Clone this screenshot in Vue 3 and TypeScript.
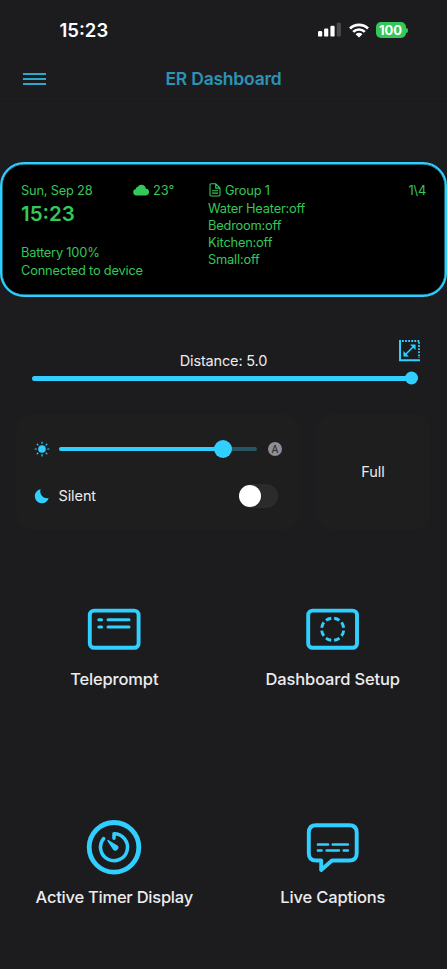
<script setup lang="ts">
import { ref } from 'vue'

interface Device {
  name: string
  state: string
}

const time = '15:23'
const devices: Device[] = [
  { name: 'Water Heater', state: 'off' },
  { name: 'Bedroom', state: 'off' },
  { name: 'Kitchen', state: 'off' },
  { name: 'Small', state: 'off' },
]
const distance = ref<number>(5)
const brightness = ref<number>(83)
const silent = ref<boolean>(false)
const rays: number[] = [0, 45, 90, 135, 180, 225, 270, 315]
</script>

<template>
  <div class="screen">
    <header class="status">
      <span class="clock">{{ time }}</span>
      <div class="indicators">
        <svg class="signal" width="24" height="16" viewBox="0 0 24 16">
          <rect x="0" y="9" width="4.2" height="5.6" rx="1.2" fill="#fff" />
          <rect x="6.1" y="6.6" width="4.2" height="8" rx="1.2" fill="#fff" />
          <rect x="12.4" y="3.8" width="4.2" height="10.8" rx="1.2" fill="#fff" />
          <rect x="18.7" y="0.8" width="4.2" height="13.8" rx="1.2" fill="#4b4b4d" />
        </svg>
        <svg class="wifi" width="20" height="15" viewBox="0 0 20 15">
          <g fill="none" stroke="#fff" stroke-width="2.7">
            <path d="M1 5.5 A12.8 12.8 0 0 1 19 5.5" />
            <path d="M4.2 8.9 A8.2 8.2 0 0 1 15.8 8.9" />
          </g>
          <path d="M6.6 11.2 A4.8 4.8 0 0 1 13.4 11.2 L10 14.6 Z" fill="#fff" />
        </svg>
        <div class="battery"><span class="level">100</span><i class="nub"></i></div>
      </div>
    </header>

    <nav class="nav">
      <button class="menu" aria-label="Menu"><i></i><i></i><i></i></button>
      <h1 class="title">ER Dashboard</h1>
    </nav>

    <section class="preview">
      <div class="left">
        <div class="row">
          <span class="date">Sun, Sep 28</span>
          <span class="weather">
            <svg width="16" height="12" viewBox="0 0 16 12">
              <path d="M3.6 11.4 A3.3 3.3 0 0 1 2.7 4.9 A2.5 2.5 0 0 1 4.6 3.1 A4.4 4.4 0 0 1 12.8 4.4 A3.5 3.5 0 0 1 12.3 11.4 Z" fill="#34c759" />
            </svg>
            <span>23°</span>
          </span>
        </div>
        <strong class="big">{{ time }}</strong>
        <span class="line bat">Battery 100%</span>
        <span class="line conn">Connected to device</span>
      </div>
      <div class="right">
        <div class="row head">
          <svg width="12" height="14" viewBox="0 0 12 14" fill="none" stroke="#34c759" stroke-width="1.1" stroke-linejoin="round">
            <path d="M2.2 .8 H6.8 L11 5 V11.8 Q11 13 9.8 13 H2.2 Q1 13 1 11.8 V2 Q1 .8 2.2 .8 Z M6.7 1 V5.1 H10.8 M3 7.7 H9 M3 10.1 H9" />
          </svg>
          <span class="group">Group 1</span>
          <span class="page">1\4</span>
        </div>
        <ul class="devices">
          <li v-for="d in devices" :key="d.name">{{ d.name }}:{{ d.state }}</li>
        </ul>
      </div>
    </section>

    <section class="distance">
      <span class="distance-label">Distance: {{ distance.toFixed(1) }}</span>
      <svg class="resize" width="22" height="22" viewBox="0 0 22 22" fill="none" stroke="#30cfff">
        <path d="M1 0 V20.2 H21" stroke-width="2" />
        <path d="M3 1 H21" stroke-width="1.8" stroke-dasharray="1.8 1.3" />
        <path d="M20 2 V18" stroke-width="1.8" stroke-dasharray="1.8 1.3" />
        <path d="M6.5 14.5 L14.5 6.5" stroke-width="1.6" />
        <path d="M11.6 4.8 H16.3 V9.5 Z M4.7 11.6 V16.3 H9.4 Z" fill="#30cfff" stroke-width=".5" stroke-linejoin="round" />
      </svg>
      <div class="track full"><i class="knob small"></i></div>
    </section>

    <section class="cards">
      <div class="card controls">
        <div class="control">
          <svg class="sun" width="16" height="16" viewBox="-8 -8 16 16">
            <circle r="3.8" fill="#30cfff" />
            <path v-for="r in rays" :key="r" d="M0 -6.9 V-5.7" :transform="`rotate(${r})`" stroke="#30cfff" stroke-width="1.2" stroke-linecap="round" />
          </svg>
          <div class="track dim">
            <div class="fill" :style="{ width: brightness + '%' }"><i class="knob"></i></div>
          </div>
          <span class="auto">A</span>
        </div>
        <div class="control silent">
          <svg class="moon" width="16" height="16" viewBox="0 0 16 16">
            <path d="M6.6 1.2 C5.1 5.9 8.8 11.2 14.7 10.2 A7.1 7.1 0 1 1 6.6 1.2 Z" fill="#30cfff" />
          </svg>
          <span class="silent-label">Silent</span>
          <button class="switch" role="switch" :aria-checked="silent" @click="silent = !silent"><i></i></button>
        </div>
      </div>
      <div class="card mode">Full</div>
    </section>

    <main class="tiles">
      <div class="tile">
        <svg width="56" height="56" viewBox="0 0 56 56" fill="none" stroke="#30cfff" stroke-linecap="round">
          <rect x="3.8" y="9.6" width="48.8" height="37.2" rx="4.4" stroke-width="3.9" />
          <path d="M12.8 18.7 H15.6 M22 18.7 H43 M12.8 26 H15.6 M22 26 H43" stroke-width="3" />
        </svg>
        <span class="caption teleprompt">Teleprompt</span>
      </div>
      <div class="tile">
        <svg width="56" height="56" viewBox="0 0 56 56" fill="none" stroke="#30cfff">
          <rect x="3.2" y="9.6" width="48.8" height="37.2" rx="4.4" stroke-width="3.9" />
          <circle cx="27.7" cy="28.2" r="11.1" stroke-width="2.9" pathLength="80" stroke-dasharray="6.6 3.4" stroke-dashoffset="-1.7" />
        </svg>
        <span class="caption">Dashboard Setup</span>
      </div>
      <div class="tile">
        <svg width="56" height="56" viewBox="0 0 56 56" fill="none" stroke="#30cfff">
          <circle cx="28" cy="28.3" r="24.8" stroke-width="4.8" />
          <path d="M28 19.3 V14.7 A13.5 13.5 0 1 1 17.7 19.5" stroke-width="3.5" stroke-linecap="round" stroke-linejoin="round" />
          <path d="M22 21.5 L31 27 A2.2 2.2 0 0 1 27.6 30.2 Z" fill="#30cfff" stroke-width="1.4" stroke-linejoin="round" />
        </svg>
        <span class="caption timer">Active Timer Display</span>
      </div>
      <div class="tile">
        <svg width="56" height="56" viewBox="0 0 56 56" fill="none" stroke="#30cfff" stroke-linejoin="round" stroke-linecap="round">
          <path d="M11.2 6.3 H44.2 Q51.7 6.3 51.7 13.8 V34.2 Q51.7 41.5 44.2 41.5 H27 L16.2 51 V41.5 H11.2 Q3.8 41.5 3.8 34.2 V13.8 Q3.8 6.3 11.2 6.3 Z" stroke-width="3.9" />
          <path d="M13 25.5 H23 M27.8 25.5 H42.8 M13 31.5 H16.5 M21.7 31.5 H33.9 M38.8 31.5 H42.8" stroke-width="2.7" />
        </svg>
        <span class="caption">Live Captions</span>
      </div>
    </main>
  </div>
</template>

<style>
body {
  background: #1c1c1e;
}
</style>

<style scoped>
* {
  box-sizing: border-box;
}
.screen {
  width: 100%;
  height: 969px;
  display: flex;
  flex-direction: column;
  background: #1c1c1e;
  color: #ececee;
  font-family: Inter, "Liberation Sans", sans-serif;
  overflow: hidden;
  white-space: nowrap;
}
button {
  border: 0;
  padding: 0;
  background: none;
}
svg {
  display: block;
  flex: none;
}
.status {
  height: 58px;
  padding: 2px 39px 0 59.5px;
  display: flex;
  align-items: center;
  justify-content: space-between;
}
.clock {
  color: #fff;
  font-size: 18.5px;
  font-weight: 600;
}
.indicators {
  display: flex;
  align-items: center;
}
.wifi {
  margin: 0 7px 0 6.5px;
}
.battery {
  display: flex;
  align-items: center;
  gap: 0.5px;
}
.level {
  width: 30px;
  height: 16px;
  border-radius: 5px;
  background: #34c759;
  color: #fff;
  font-size: 13px;
  font-weight: 700;
  line-height: 16px;
  text-align: center;
}
.nub {
  width: 2px;
  height: 5px;
  border-radius: 0 2px 2px 0;
  background: #34c759;
}
.nav {
  height: 44px;
  display: grid;
  grid-template-columns: 60px 1fr 60px;
  align-items: center;
  padding-bottom: 2px;
  border-bottom: 1px solid #19191b;
}
.menu {
  width: 23px;
  margin-left: 23px;
  display: grid;
  gap: 3px;
}
.menu i {
  height: 2px;
  background: #2ca8cd;
}
.title {
  margin: 0;
  text-align: center;
  color: #2b93b8;
  font-size: 17.5px;
  font-weight: 600;
  letter-spacing: -0.22px;
}
.preview {
  height: 135px;
  margin-top: 60px;
  padding: 18px 19px 0 19px;
  display: grid;
  grid-template-columns: 187px 1fr;
  border: 2px solid #30cfff;
  border-radius: 24px;
  box-shadow: inset 0 0 0 0.5px #30cfff;
  background: #000;
  color: #34c759;
  font-size: 12.8px;
  letter-spacing: -0.18px;
}
.left,
.right {
  display: flex;
  flex-direction: column;
}
.row {
  display: flex;
  align-items: center;
  height: 16px;
}
.date {
  width: 112px;
}
.weather {
  display: flex;
  align-items: center;
  gap: 4px;
  letter-spacing: 0;
}
.big {
  font-size: 20.5px;
  font-weight: 600;
  line-height: 32px;
  letter-spacing: 0;
}
.line {
  line-height: 18px;
}
.bat {
  margin-top: 14px;
}
.group {
  margin-left: 4px;
}
.head {
  padding-left: 1px;
}
.page {
  margin-left: auto;
}
.devices {
  margin: 2px 0 0;
  padding: 0;
  list-style: none;
  line-height: 17px;
}
.distance {
  position: relative;
  height: 117px;
  padding: 54px 32px 0;
  display: flex;
  flex-direction: column;
}
.distance-label {
  height: 20px;
  line-height: 20px;
  text-align: center;
  font-size: 14.5px;
  letter-spacing: -0.15px;
}
.resize {
  position: absolute;
  top: 43px;
  right: 26px;
}
.track {
  position: relative;
  height: 4.6px;
  border-radius: 3px;
}
.track.full {
  margin-top: 5px;
  background: #30cfff;
}
.track.dim {
  flex: 1;
  background: #265564;
}
.fill {
  position: relative;
  height: 100%;
  border-radius: inherit;
  background: #30cfff;
}
.knob {
  position: absolute;
  right: -9px;
  top: 50%;
  width: 18px;
  height: 18px;
  border-radius: 50%;
  background: #30cfff;
  transform: translateY(-50%);
}
.knob.small {
  right: -3px;
  width: 13px;
  height: 13px;
}
.cards {
  height: 116px;
  padding: 0 17px 0 16px;
  display: grid;
  grid-template-columns: 284px 1fr;
  gap: 16px;
}
.card {
  border-radius: 17px;
  background: #1e1e1e;
}
.controls {
  padding: 22.5px 18px 0 17.5px;
}
.control {
  height: 25px;
  display: flex;
  align-items: center;
}
.sun {
  margin-right: 9.5px;
}
.auto {
  width: 14px;
  height: 14px;
  margin-left: 11px;
  border-radius: 50%;
  background: #8e8e93;
  color: #1e1e1e;
  font-size: 10px;
  line-height: 14px;
  text-align: center;
}
.silent {
  margin-top: 21.5px;
}
.silent-label {
  margin-left: 9px;
  font-size: 14.5px;
  letter-spacing: -0.1px;
}
.switch {
  width: 39px;
  height: 24px;
  margin-left: auto;
  margin-right: 4px;
  padding: 1px 0;
  border-radius: 12px;
  background: #2b2b2b;
}
.switch i {
  display: block;
  width: 22px;
  height: 22px;
  border-radius: 50%;
  background: #fff;
}
.switch[aria-checked="true"] i {
  margin-left: auto;
}
.mode {
  display: flex;
  align-items: center;
  justify-content: center;
  padding-bottom: 2px;
  font-size: 14.5px;
}
.tiles {
  padding: 71px 5px 0;
  display: grid;
  grid-template-columns: 1fr 1fr;
  grid-template-rows: 218px 150px;
}
.tile {
  display: flex;
  flex-direction: column;
  align-items: center;
}
.caption {
  margin-top: 11px;
  font-size: 16.5px;
  line-height: 22px;
  font-weight: 500;
  letter-spacing: -0.15px;
}
.caption.timer {
  letter-spacing: -0.24px;
}
</style>
